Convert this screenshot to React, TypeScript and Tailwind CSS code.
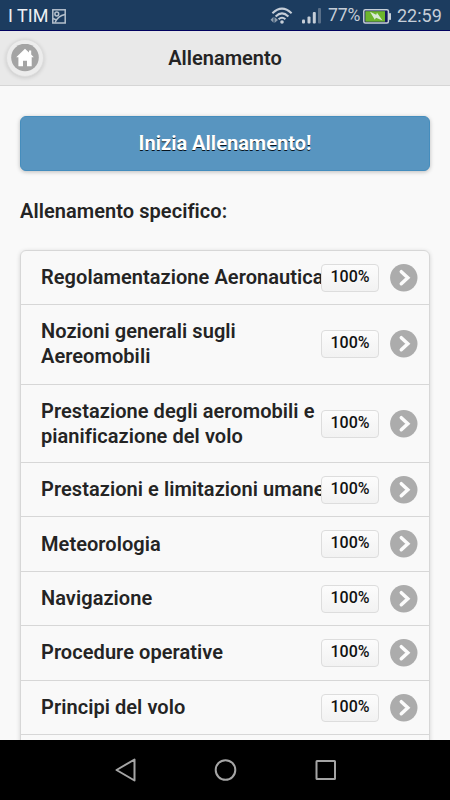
const rows = [
  { lines: ['Regolamentazione Aeronautica'], h: 'h-[54px]' },
  { lines: ['Nozioni generali sugli', 'Aereomobili'], h: 'h-[80px] pb-[2px]' },
  { lines: ['Prestazione degli aeromobili e', 'pianificazione del volo'], h: 'h-[78px]' },
  { lines: ['Prestazioni e limitazioni umane'], h: 'h-[54px]' },
  { lines: ['Meteorologia'], h: 'h-[55px]' },
  { lines: ['Navigazione'], h: 'h-[54px]' },
  { lines: ['Procedure operative'], h: 'h-[55px] pb-px' },
  { lines: ['Principi del volo'], h: 'h-[54px]' },
];

function StatusBar() {
  return (
    <div className="flex h-[31px] shrink-0 items-center border-b border-[#02025f] bg-[#1c3c5f] px-2 pt-[2px] text-[18px] leading-none text-[#c6ced8]">
      <span className="whitespace-nowrap text-[18px] text-[#eef1f4]">I TIM</span>
      <svg className="ml-1" width="14" height="15" viewBox="0 0 14 15" fill="none" stroke="#b5c0cc" strokeWidth="1.5">
        <rect x="0.8" y="0.8" width="12.4" height="13.2" />
        <circle cx="4.8" cy="5" r="1.9" />
        <path d="M1 9.5l3.5 1.5M3 13.5C5 9 8 6.5 13 5.5" />
      </svg>
      <svg className="ml-auto" width="24" height="18" viewBox="0 0 24 18" fill="none" stroke="#c6ced8" strokeWidth="2">
        <path d="M2.4 6.2Q12-3 21.6 6.2M5.6 9.4Q12 3.4 18.4 9.4M8.6 12.3Q12 9.2 15.4 12.3" />
        <circle cx="12" cy="15" r="1.8" fill="#c6ced8" stroke="none" />
        <path d="M0.5 12.8l3-3v6zM4.5 10l3.5 3-3.5 3z" fill="#8e9dad" stroke="none" />
      </svg>
      <svg className="ml-2" width="19" height="16" viewBox="0 0 19 16" fill="#c6ced8">
        <rect x="0" y="11.5" width="3" height="4" rx="1" />
        <rect x="5.5" y="8.5" width="3" height="7" rx="1" />
        <rect x="10.8" y="4" width="3" height="11.5" rx="1" />
        <rect x="16" y="0" width="3" height="15.5" rx="1" fill="#5a7089" />
      </svg>
      <span className="ml-[7px] w-[34px] whitespace-nowrap text-[17.6px] tracking-[-0.2px]">77%</span>
      <svg className="ml-px" width="28" height="15" viewBox="0 0 28 15">
        <rect x="0.8" y="0.8" width="24.6" height="13.2" rx="1.5" fill="#13175f" stroke="#c7d0d7" strokeWidth="1.5" />
        <rect x="26" y="4" width="2" height="7" rx="0.8" fill="#c7d0d7" />
        <rect x="2.3" y="2.2" width="19.7" height="10.5" fill="#6db52d" />
        <path d="M7 2.8L13.2 5.8L14 3.8L19.5 11.5L13 8.8L11.8 10.8Z" fill="#d9ead5" />
      </svg>
      <span className="ml-[6px] w-[45px] whitespace-nowrap">22:59</span>
    </div>
  );
}

function ArrowIcon() {
  return (
    <svg className="shrink-0" width="28" height="28" viewBox="0 0 28 28">
      <circle cx="13.8" cy="13.8" r="13.7" fill="#acacac" />
      <path d="M11.3 7.7L17.8 13.7L11.3 19.7" fill="none" stroke="#fcfcfc" strokeWidth="3.5" strokeLinecap="round" />
    </svg>
  );
}

export default function App() {
  return (
    <div className="flex h-[800px] w-[450px] flex-col overflow-hidden bg-[#f9f9f9] font-['Roboto',sans-serif] text-[#242424]">
      <StatusBar />
      <header className="flex h-[55px] shrink-0 items-center border-b border-[#d6d6d6] bg-[#e9e9e9] pl-[6px]">
        <button className="flex size-[38px] items-center justify-center rounded-full border border-[#dddddd] bg-[#ececec] shadow-[0_1px_4px_rgba(0,0,0,0.14)]">
          <svg width="28" height="28" viewBox="0 0 28 28">
            <circle cx="14" cy="13.5" r="13.8" fill="#a4a4a4" />
            <path d="M14 4.8L5.2 13.2H7.4V22.2H12V16.7H16V22.2H20.7V13.2H22.8L20.2 10.5V6.5H18V8.4Z" fill="white" />
          </svg>
        </button>
        <h1 className="mr-[44px] flex-1 text-center text-[20px] font-semibold leading-none">Allenamento</h1>
      </header>
      <main className="min-h-0 flex-1 overflow-hidden px-5 pt-[30px]">
        <button className="flex h-[55px] w-full items-center justify-center rounded-[6px] border border-[#458dbd] bg-[#5895c0] pb-[2px] text-[20px] font-bold text-white shadow-[0_1px_4px_rgba(0,0,0,0.25)] [text-shadow:0_1px_0_#06131d]">Inizia Allenamento!</button>
        <h2 className="mt-7 h-[51px] text-[20px] font-semibold leading-[25px] tracking-[0.06px]">Allenamento specifico:</h2>
        <ul className="rounded-[6px] border border-[#d7d7d7] shadow-[0_1px_4px_rgba(0,0,0,0.16)]">
          {rows.map((row) => (
            <li key={row.lines[0]} className={`flex items-center border-b border-[#d7d7d7] pl-5 pr-[11px] ${row.h}`}>
              <div className="w-[280px] shrink-0 whitespace-nowrap text-[20px] font-semibold leading-[25px] tracking-[0.06px]">
                {row.lines.map((line) => <div key={line}>{line}</div>)}
              </div>
              <span className="z-10 flex h-[28px] w-[58px] shrink-0 justify-center rounded-[4px] border border-[#dddddd] bg-gradient-to-b from-[#fcfcfc] to-[#f2f2f2] text-[16px] font-medium leading-[23px] text-[#111111]">100%</span>
              <div className="ml-[11px] flex"><ArrowIcon /></div>
            </li>
          ))}
          <li className="h-[55px]" />
        </ul>
      </main>
      <nav className="flex h-[60px] shrink-0 items-center bg-black pl-[115px]">
        <svg width="222" height="26" viewBox="0 0 222 26" fill="none" stroke="#a5a5a5" strokeWidth="2" strokeLinejoin="round">
          <path d="M1.5 13L19.5 2.5V23.5Z" />
          <circle cx="110.5" cy="13" r="9.8" />
          <rect x="201.5" y="4" width="18.5" height="18" rx="0.5" />
        </svg>
      </nav>
    </div>
  );
}
